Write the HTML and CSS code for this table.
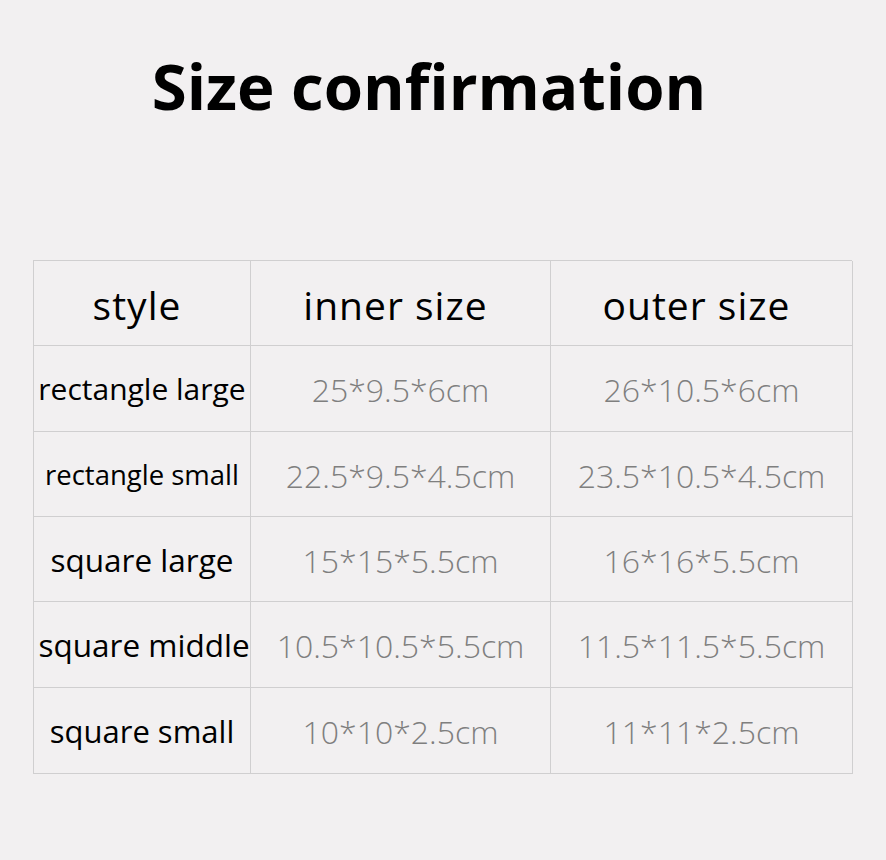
FILE: index.html
```html
<!DOCTYPE html>
<html>
<head>
<meta charset="utf-8">
<link rel="stylesheet" href="styles.css">
</head>
<body>
<div class="page">
  <h1 class="title">Size confirmation</h1>
  <div class="table">
    <div class="cell head">style</div>
    <div class="cell head">inner size</div>
    <div class="cell head">outer size</div>

    <div class="cell name n1">rectangle large</div>
    <div class="cell val">25*9.5*6cm</div>
    <div class="cell val">26*10.5*6cm</div>

    <div class="cell name n2">rectangle small</div>
    <div class="cell val">22.5*9.5*4.5cm</div>
    <div class="cell val">23.5*10.5*4.5cm</div>

    <div class="cell name n3">square large</div>
    <div class="cell val">15*15*5.5cm</div>
    <div class="cell val">16*16*5.5cm</div>

    <div class="cell name n4">square middle</div>
    <div class="cell val">10.5*10.5*5.5cm</div>
    <div class="cell val">11.5*11.5*5.5cm</div>

    <div class="cell name n5">square small</div>
    <div class="cell val">10*10*2.5cm</div>
    <div class="cell val">11*11*2.5cm</div>
  </div>
</div>
</body>
</html>
```

FILE: styles.css
```css
html, body {
  margin: 0;
  padding: 0;
  background: #f2f0f1;
}
.page {
  width: 886px;
  height: 860px;
  padding-top: 43px;
  box-sizing: border-box;
}
.title {
  margin: 0;
  height: 217px;
  text-align: center;
  font-family: "Open Sans", sans-serif;
  font-weight: 700;
  font-size: 63.5px;
  line-height: 86px;
  color: #000;
  padding-right: 28px;
  box-sizing: border-box;
}
.table {
  margin-left: 33px;
  width: 819px;
  display: grid;
  grid-template-columns: 217px 300px 302px;
  grid-template-rows: 85px 86px 85px 85px 86px 86px;
  border-top: 1px solid #d0cfd0;
  border-left: 1px solid #d0cfd0;
  box-sizing: border-box;
}
.cell {
  display: flex;
  align-items: center;
  justify-content: center;
  border-right: 1px solid #d0cfd0;
  border-bottom: 1px solid #d0cfd0;
  white-space: nowrap;
}
.head {
  font-family: "Open Sans", sans-serif;
  font-size: 39px;
  letter-spacing: 1px;
  color: #000;
  padding-top: 2px;
  padding-right: 10px;
}
.name {
  font-family: "Open Sans", sans-serif;
  color: #000;
  font-size: 30px;
}
.n2 { font-size: 27.5px; }
.n3 { font-size: 31.5px; }
.n4 { font-size: 31.5px; padding-left: 4px; }
.n5 { font-size: 31px; }
.val {
  font-family: "Open Sans", sans-serif;
  font-weight: 300;
  color: #7f7f7f;
  font-size: 32px;
  padding-top: 2px;
}
```
